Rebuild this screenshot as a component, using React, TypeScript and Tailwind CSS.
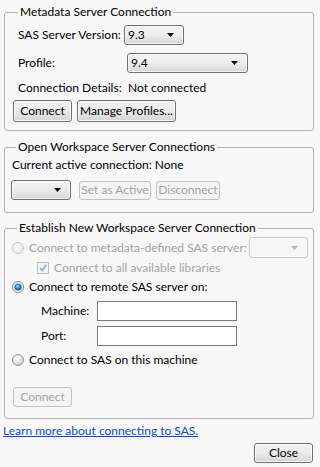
import React from 'react'

const font = "font-['Lato','Liberation_Sans',sans-serif]"

function Arrow({ disabled }: { disabled?: boolean }) {
    return (
        <svg width="7" height="4" viewBox="0 0 7 4">
            <polygon points="0,0 7,0 3.5,4" fill={disabled ? '#b4b4b4' : '#000'} />
        </svg>
    )
}

function Combo({ value, w, disabled }: { value?: string, w: string, disabled?: boolean }) {
    const base = disabled
        ? 'border-[#c8c8c8] bg-[#f6f6f6]'
        : 'border-[#707070] bg-gradient-to-b from-[#f4f4f4] via-[#ececec] to-[#d6d6d6]'
    return (
        <div className={`${w} h-full rounded-[3px] border ${base} flex items-center pl-[3px] pr-[9px] shadow-[inset_0_0_0_1px_rgba(255,255,255,0.7)]`}>
            <span className="flex-1 leading-none">{value}</span>
            <Arrow disabled={disabled} />
        </div>
    )
}

function Btn({ children, w, disabled }: { children: React.ReactNode, w: string, disabled?: boolean }) {
    const cls = disabled
        ? 'border-[#c2c2c2] bg-[#f4f4f4] text-[#a3a3a3]'
        : 'border-[#707070] bg-gradient-to-b from-[#f2f2f2] via-[#ebebeb] to-[#d4d4d4] text-black shadow-[inset_0_0_0_1px_rgba(255,255,255,0.8)]'
    return (
        <div className={`${w} h-full rounded-[3px] border ${cls} flex items-center justify-center leading-none`}>
            {children}
        </div>
    )
}

function Radio({ state }: { state: 'off' | 'on' | 'disabled' }) {
    if (state === 'on') {
        return (
            <svg width="12" height="12" viewBox="0 0 12 12">
                <defs>
                    <radialGradient id="rOn" cx="0.45" cy="0.4" r="0.6">
                        <stop offset="0" stopColor="#bfe6ff" />
                        <stop offset="0.45" stopColor="#2a8fe0" />
                        <stop offset="1" stopColor="#0d4f96" />
                    </radialGradient>
                </defs>
                <circle cx="6" cy="6" r="5.5" fill="#f0f0f0" stroke="#8a8a8a" />
                <circle cx="6" cy="6" r="3.6" fill="url(#rOn)" />
            </svg>
        )
    }
    const dis = state === 'disabled'
    return (
        <svg width="12" height="12" viewBox="0 0 12 12">
            <defs>
                <radialGradient id={dis ? 'rDis' : 'rOff'} cx="0.4" cy="0.35" r="0.7">
                    <stop offset="0" stopColor="#ffffff" />
                    <stop offset="1" stopColor={dis ? '#e4e4e4' : '#c9c9c9'} />
                </radialGradient>
            </defs>
            <circle cx="6" cy="6" r="5.5" fill={`url(#${dis ? 'rDis' : 'rOff'})`} stroke={dis ? '#c4c4c4' : '#9a9a9a'} />
        </svg>
    )
}

function Group({ title, children, cls }: { title: string, children: React.ReactNode, cls: string }) {
    return (
        <fieldset className={`ml-[4px] w-[310px] rounded-[3px] border border-[#b5b5b5] ${cls}`}>
            <legend className="ml-[5px] px-[2px] leading-[14px]">{title}</legend>
            {children}
        </fieldset>
    )
}

export default function App() {
    return (
        <div className={`w-[320px] h-[467px] bg-[#f7f7f7] text-[12px] text-black ${font} flex flex-col overflow-hidden`}>
            {/* Metadata */}
            <Group title="Metadata Server Connection" cls="mt-[5px] pl-[8px] pb-[8px]">
                <div className="mt-[6px] h-[20px] flex items-center">
                    <span className="ml-[5px] w-[106px]">SAS Server Version:</span>
                    <Combo value="9.3" w="w-[60px]" />
                </div>
                <div className="mt-[8px] h-[20px] flex items-center">
                    <span className="ml-[5px] w-[109px]">Profile:</span>
                    <Combo value="9.4" w="w-[121px]" />
                </div>
                <div className="mt-[8px] h-[14px] flex items-center leading-[14px]">
                    <span className="ml-[5px] w-[110px]">Connection Details:</span>
                    <span>Not connected</span>
                </div>
                <div className="mt-[5px] h-[22px] flex gap-[5px]">
                    <Btn w="w-[59px]">Connect</Btn>
                    <Btn w="w-[99px]">Manage Profiles...</Btn>
                </div>
            </Group>

            {/* Workspace */}
            <Group title="Open Workspace Server Connections" cls="mt-[9px] pl-[6px] pb-[12px]">
                <div className="mt-[4px] h-[14px] leading-[14px] ml-[1px]">Current active connection: None</div>
                <div className="mt-[8px] h-[20px] flex items-center">
                    <Combo w="w-[60px]" />
                    <div className="ml-[8px] h-[19px] flex gap-[5px]">
                        <Btn w="w-[72px]" disabled>Set as Active</Btn>
                        <Btn w="w-[64px]" disabled>Disconnect</Btn>
                    </div>
                </div>
            </Group>

            {/* New connection */}
            <Group title="Establish New Workspace Server Connection" cls="mt-[8px] pl-[7px] pr-[5px] pb-[11px]">
                <div className="mt-[2px] h-[21px] flex items-center text-[#a3a3a3]">
                    <Radio state="disabled" />
                    <span className="ml-[5px]">Connect to metadata-defined SAS server:</span>
                    <div className="ml-auto h-full">
                        <Combo w="w-[59px]" disabled />
                    </div>
                </div>
                <div className="mt-[3px] h-[14px] flex items-center text-[#a3a3a3] leading-[14px]">
                    <div className="ml-[25px] w-[12px] h-[12px] border border-[#bdbdbd] bg-[#f3f3f3] flex items-center justify-center">
                        <svg width="10" height="10" viewBox="0 0 10 10">
                            <path d="M2 5.2 L4.2 7.5 L8.2 1.8" fill="none" stroke="#8fa9cc" strokeWidth="1.6" />
                        </svg>
                    </div>
                    <span className="ml-[5px]">Connect to all available libraries</span>
                </div>
                <div className="mt-[5px] h-[14px] flex items-center leading-[14px]">
                    <Radio state="on" />
                    <span className="ml-[5px]">Connect to remote SAS server on:</span>
                </div>
                <div className="mt-[7px] h-[20px] flex items-center">
                    <span className="ml-[29px] w-[56px]">Machine:</span>
                    <div className="w-[140px] h-full border border-[#7a7a7a] bg-white" />
                </div>
                <div className="mt-[5px] h-[20px] flex items-center">
                    <span className="ml-[29px] w-[56px]">Port:</span>
                    <div className="w-[140px] h-full border border-[#7a7a7a] bg-white" />
                </div>
                <div className="mt-[7px] h-[14px] flex items-center leading-[14px]">
                    <Radio state="off" />
                    <span className="ml-[5px]">Connect to SAS on this machine</span>
                </div>
                <div className="mt-[20px] h-[20px] ml-[1px] flex">
                    <Btn w="w-[59px]" disabled>Connect</Btn>
                </div>
            </Group>

            <a className="mt-[5px] ml-[3px] leading-[14px] text-[#1049d8] underline w-fit">Learn more about connecting to SAS.</a>

            <div className="mt-[5px] h-[20px] flex justify-end pr-[7px]">
                <Btn w="w-[59px]">Close</Btn>
            </div>
        </div>
    )
}
